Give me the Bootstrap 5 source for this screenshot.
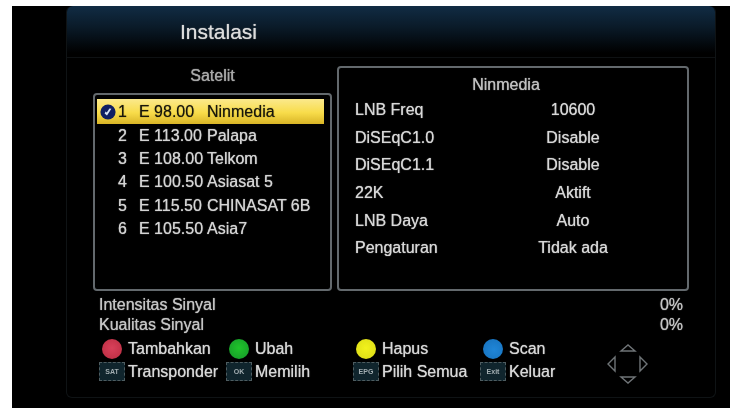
<!DOCTYPE html>
<html lang="id">

<head>
    <meta charset="UTF-8" />
    <meta name="viewport" content="width=device-width, initial-scale=1.0" />
    <title>Instalasi</title>
    <link href="https://cdn.jsdelivr.net/npm/bootstrap@5.3.0/dist/css/bootstrap.min.css" rel="stylesheet" />
    <style>
        html, body { background: #fff; overflow: hidden; }

        .tv-screen {
            width: 718px;
            height: 402px;
            margin: 6px 0 0 12px;
            padding: 0 14px 10px 54px;
            background: #000;
            color: #d8d8d8;
            font-family: "Liberation Sans", Arial, sans-serif;
            font-size: 16px;
            line-height: 1;
            text-shadow: 0 0 1px rgba(225, 225, 225, 0.9);
            filter: blur(0.6px);
        }

        .osd-panel {
            height: 100%;
            border: 1px solid #0f1315;
            border-top: 0;
            border-radius: 6px;
        }

        .osd-head {
            height: 52px;
            padding-left: 113px;
            border-bottom: 1px solid #0e1113;
            border-radius: 6px 6px 0 0;
            background: linear-gradient(#112c44, #0a1a28 42%, #000 92%);
            color: #dcdcdc;
            font-size: 21px;
        }

        .osd-body { padding: 8px 26px 0 26px; gap: 5px; }

        .sat-col { width: 239px; }
        .sat-title { height: 27px; padding-top: 2px; color: #a8a8a8; }

        .osd-box {
            border: 2px solid #63696d;
            border-radius: 4px;
        }

        .sat-list { height: 198px; padding: 4px 6px 0 2px; }

        .sat-row { height: 23.3px; color: #d4d4d4; }
        .sat-row.is-active {
            height: 25px;
            background: linear-gradient(#fbe98c, #f8dc4a 55%, #d9b526);
            color: #17150a;
            text-shadow: 0 0 1px rgba(20, 20, 10, 0.7);
        }
        .sat-mark { width: 21px; flex: none; }
        .sat-num { width: 21px; flex: none; }
        .sat-pos { width: 68px; flex: none; }

        .info-box { width: 352px; height: 225px; padding-top: 9px; }
        .info-title { height: 19px; padding-right: 14px; color: #c0c0c0; }
        .info-row { height: 27.7px; padding-left: 16px; }
        .info-label { width: 150px; flex: none; }
        .info-value { width: 136px; flex: none; }

        .signal-wrap { padding: 4px 32px 0 32px; color: #c4c4c4; }
        .signal-row { height: 20px; }

        .legend-wrap { padding: 2px 0 0 32px; }
        .legend-grid {
            width: 508px;
            display: grid;
            grid-template-columns: repeat(4, 127px);
            grid-auto-rows: 23px;
        }
        .legend-icon { width: 26px; margin-right: 3px; flex: none; }

        .dot-key {
            width: 20px;
            height: 20px;
            border-radius: 50%;
        }
        .dot-red { background: radial-gradient(circle at 50% 45%, #d8405a, #b82c40); }
        .dot-green { background: radial-gradient(circle at 50% 45%, #1fc52a, #15962a); }
        .dot-yellow { background: radial-gradient(circle at 50% 45%, #f2f21c, #d9d916); }
        .dot-blue { background: radial-gradient(circle at 55% 55%, #1f86d8, #1670bb); }

        .rc-key {
            width: 26px;
            height: 19px;
            border: 1px dashed #4e5c60;
            background: #10252d;
            color: #a3aeb2;
            font-size: 7px;
            font-weight: 700;
            text-shadow: none;
        }

        .dpad-icon { margin-top: 7px; }
    </style>
</head>

<body>
    <div class="tv-screen">
        <div class="osd-panel">
            <div class="osd-head d-flex align-items-center">Instalasi</div>

            <div class="osd-body d-flex align-items-start">
                <div class="sat-col">
                    <div class="sat-title text-center">Satelit</div>
                    <div class="osd-box sat-list" id="satList"></div>
                </div>
                <div class="osd-box info-box">
                    <div class="info-title text-center">Ninmedia</div>
                    <div id="infoRows"></div>
                </div>
            </div>

            <div class="signal-wrap">
                <div class="signal-row d-flex justify-content-between align-items-center"><span>Intensitas Sinyal</span><span>0%</span></div>
                <div class="signal-row d-flex justify-content-between align-items-center"><span>Kualitas Sinyal</span><span>0%</span></div>
            </div>

            <div class="legend-wrap d-flex">
                <div class="legend-grid">
                    <div class="d-flex align-items-center"><span class="legend-icon d-flex justify-content-center"><span class="dot-key dot-red"></span></span>Tambahkan</div>
                    <div class="d-flex align-items-center"><span class="legend-icon d-flex justify-content-center"><span class="dot-key dot-green"></span></span>Ubah</div>
                    <div class="d-flex align-items-center"><span class="legend-icon d-flex justify-content-center"><span class="dot-key dot-yellow"></span></span>Hapus</div>
                    <div class="d-flex align-items-center"><span class="legend-icon d-flex justify-content-center"><span class="dot-key dot-blue"></span></span>Scan</div>
                    <div class="d-flex align-items-center"><span class="legend-icon rc-key d-flex align-items-center justify-content-center">SAT</span>Transponder</div>
                    <div class="d-flex align-items-center"><span class="legend-icon rc-key d-flex align-items-center justify-content-center">OK</span>Memilih</div>
                    <div class="d-flex align-items-center"><span class="legend-icon rc-key d-flex align-items-center justify-content-center">EPG</span>Pilih Semua</div>
                    <div class="d-flex align-items-center"><span class="legend-icon rc-key d-flex align-items-center justify-content-center">Exit</span>Keluar</div>
                </div>
                <svg class="dpad-icon" width="42" height="40" viewBox="0 0 42 40" fill="none" stroke="#6f7477" stroke-width="1.4">
                    <path d="M14 7 21 1l7 6z" />
                    <path d="M14 33l7 6 7-6z" />
                    <path d="M8 13l-7 7 7 7z" />
                    <path d="M33 13l7 7-7 7z" />
                </svg>
            </div>
        </div>
    </div>

    <script>
        const daftarSatelit = [
            ["1", "E 98.00", "Ninmedia"],
            ["2", "E 113.00", "Palapa"],
            ["3", "E 108.00", "Telkom"],
            ["4", "E 100.50", "Asiasat 5"],
            ["5", "E 115.50", "CHINASAT 6B"],
            ["6", "E 105.50", "Asia7"]
        ];

        const daftarInfo = [
            ["LNB Freq", "10600"],
            ["DiSEqC1.0", "Disable"],
            ["DiSEqC1.1", "Disable"],
            ["22K", "Aktift"],
            ["LNB Daya", "Auto"],
            ["Pengaturan", "Tidak ada"]
        ];

        const tandaCek = `<svg width="16" height="16" viewBox="0 0 16 16"><circle cx="8" cy="8" r="7.6" fill="#0f1f63"/><path d="M4.6 9.6 7 11.4 11.4 4.8 9.4 4.4 6.8 8.4 5.6 7.6z" fill="#d5e2f5"/></svg>`;

        document.getElementById("satList").innerHTML = daftarSatelit.map((item, index) => `
            <div class="sat-row d-flex align-items-center ${index === 0 ? "is-active" : ""}">
                <span class="sat-mark d-flex justify-content-center">${index === 0 ? tandaCek : ""}</span>
                <span class="sat-num">${item[0]}</span>
                <span class="sat-pos">${item[1]}</span>
                <span>${item[2]}</span>
            </div>`).join("");

        document.getElementById("infoRows").innerHTML = daftarInfo.map(item => `
            <div class="info-row d-flex align-items-center">
                <span class="info-label">${item[0]}</span>
                <span class="info-value text-center">${item[1]}</span>
            </div>`).join("");
    </script>
    <script src="https://cdn.jsdelivr.net/npm/bootstrap@5.3.0/dist/js/bootstrap.bundle.min.js"></script>
</body>

</html>
